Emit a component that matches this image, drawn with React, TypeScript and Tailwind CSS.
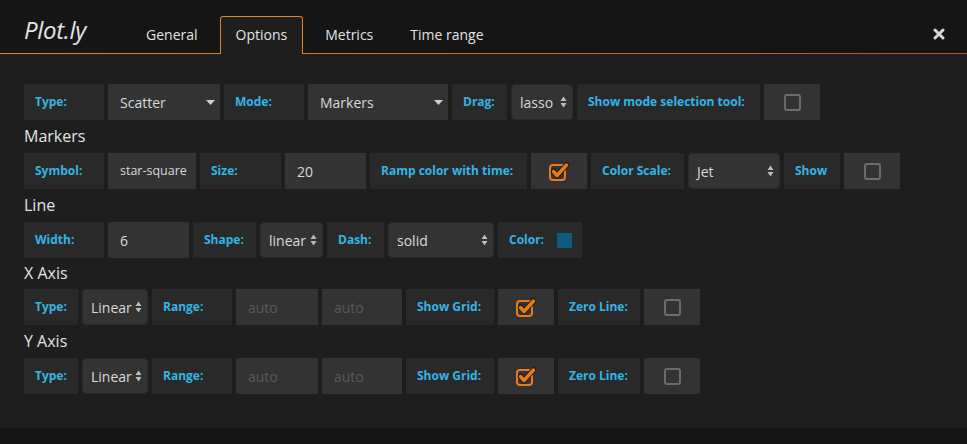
import React from "react";

const font = { fontFamily: '"Open Sans", "Noto Sans", "Liberation Sans", sans-serif' };

function Label({ w, children }: { w: string; children: React.ReactNode }) {
  return (
    <div className={`${w} h-[36px] shrink-0 bg-[#292929] flex items-center pl-[11px] text-[12px] font-bold text-[#33b5e5] whitespace-nowrap`}>
      {children}
    </div>
  );
}

function Value({ w, children, muted = false, size = "text-[14px]" }: { w: string; children: React.ReactNode; muted?: boolean; size?: string }) {
  return (
    <div className={`${w} h-[36px] shrink-0 bg-[#333333] flex items-center pl-[12px] ${size} ${muted ? "text-[#5a5a5a]" : "text-[#d8d9da]"} whitespace-nowrap`}>
      {children}
    </div>
  );
}

function Caret() {
  return (
    <svg width="9" height="5" viewBox="0 0 9 5" className="ml-auto mr-[5px]">
      <path d="M0 0 L9 0 L4.5 5 Z" fill="#cfcfcf" />
    </svg>
  );
}

function UpDown() {
  return (
    <svg width="7" height="12" viewBox="0 0 7 12" className="ml-auto mr-[5px]">
      <path d="M0.5 5 L3.5 0.5 L6.5 5 Z" fill="#bdbdbd" />
      <path d="M0.5 7 L3.5 11.5 L6.5 7 Z" fill="#bdbdbd" />
    </svg>
  );
}

function SelectDown({ w, children }: { w: string; children: React.ReactNode }) {
  return (
    <div className={`${w} h-[36px] shrink-0 bg-[#333333] flex items-center pl-[12px] text-[14px] text-[#d8d9da]`}>
      <span>{children}</span>
      <Caret />
    </div>
  );
}

function SelectNative({ w, children }: { w: string; children: React.ReactNode }) {
  return (
    <div className={`${w} h-[36px] shrink-0 bg-[#333333] rounded-[4px] border border-[#2a2a2a] flex items-center pl-[8px] text-[14px] text-[#d8d9da]`}>
      <span>{children}</span>
      <UpDown />
    </div>
  );
}

function Check({ checked, w = "w-[56px]" }: { checked: boolean; w?: string }) {
  return (
    <div className={`${w} h-[36px] shrink-0 bg-[#333333] flex items-center justify-center`}>
      {checked ? (
        <svg width="22" height="22" viewBox="0 0 22 22">
          <rect x="2" y="5" width="15" height="15" rx="3" fill="none" stroke="#eb7b18" strokeWidth="2" />
          <path d="M5.5 11.5 L9 15.5 L18.5 5" fill="none" stroke="#1a1a1a" strokeWidth="5.5" strokeLinecap="round" strokeLinejoin="round" />
          <path d="M5.5 11.5 L9 15.5 L18.5 5" fill="none" stroke="#eb7b18" strokeWidth="3.5" strokeLinecap="round" strokeLinejoin="round" />
        </svg>
      ) : (
        <div className="w-[17px] h-[17px] rounded-[3px] border-2 border-[#6b6b6b]" />
      )}
    </div>
  );
}

function Heading({ children, h = "h-[33px]" }: { children: React.ReactNode; h?: string }) {
  return <div className={`${h} flex items-center text-[16px] text-[#e3e3e3] pb-[1px]`}>{children}</div>;
}

function Row({ children }: { children: React.ReactNode }) {
  return <div className="flex items-center gap-[4px] h-[36px]">{children}</div>;
}

export default function App() {
  return (
    <div style={font} className="w-[967px] h-[444px] bg-[#151515] overflow-hidden">
      <div className="h-[54px] flex items-end relative">
        <div className="absolute left-0 right-0 bottom-0 h-[1px] bg-gradient-to-r from-[#dc8a28] to-[#c24a2a]" />
        <div className="h-[54px] pl-[24px] w-[131px] flex items-start pt-[12px] text-[24px] italic text-[#e3e3e3] tracking-[-0.3px]">
          Plot.ly
        </div>
        <div className="flex gap-[7px] items-end relative">
          <div className="h-[37px] px-[15px] flex items-center text-[14px] text-[#e3e3e3] pb-[2px]">General</div>
          <div className="h-[38px] px-[15px] flex items-center text-[14px] text-[#e3e3e3] bg-[#1f1e1f] border border-b-0 border-[#d8862a] rounded-t-[3px] pb-[2px]">Options</div>
          <div className="h-[37px] px-[15px] flex items-center text-[14px] text-[#e3e3e3] pb-[2px]">Metrics</div>
          <div className="h-[37px] px-[15px] flex items-center text-[14px] text-[#e3e3e3] pb-[2px]">Time range</div>
        </div>
        <div className="ml-auto mr-[22px] mb-[14px]">
          <svg width="12" height="12" viewBox="0 0 12 12">
            <path d="M2 2 L10 10 M10 2 L2 10" stroke="#d8d8d8" strokeWidth="3" strokeLinecap="round" />
          </svg>
        </div>
      </div>

      <div className="h-[374px] bg-[#1f1e1f] pl-[24px] pt-[30px]">
        <Row>
          <Label w="w-[80px]">Type:</Label>
          <SelectDown w="w-[112px]">Scatter</SelectDown>
          <Label w="w-[80px]">Mode:</Label>
          <SelectDown w="w-[140px]">Markers</SelectDown>
          <Label w="w-[55px]">Drag:</Label>
          <SelectNative w="w-[62px]">lasso</SelectNative>
          <Label w="w-[183px]">Show mode selection tool:</Label>
          <Check checked={false} />
        </Row>
        <Heading>Markers</Heading>
        <Row>
          <Label w="w-[80px]">Symbol:</Label>
          <Value w="w-[88px]" size="text-[12.5px]">star-square</Value>
          <Label w="w-[81px]">Size:</Label>
          <Value w="w-[81px]">20</Value>
          <Label w="w-[157px]">Ramp color with time:</Label>
          <Check checked={true} />
          <Label w="w-[93px]">Color Scale:</Label>
          <SelectNative w="w-[92px]">Jet</SelectNative>
          <Label w="w-[56px]">Show</Label>
          <Check checked={false} />
        </Row>
        <Heading>Line</Heading>
        <Row>
          <Label w="w-[80px]">Width:</Label>
          <Value w="w-[81px]">6</Value>
          <Label w="w-[63px]">Shape:</Label>
          <SelectNative w="w-[63px]">linear</SelectNative>
          <Label w="w-[57px]">Dash:</Label>
          <SelectNative w="w-[106px]">solid</SelectNative>
          <Label w="w-[84px]">
            <span>Color:</span>
            <span className="ml-[13px] w-[15px] h-[15px] bg-[#0f5a80] inline-block" />
          </Label>
        </Row>
        <Heading h="h-[31px]">X Axis</Heading>
        <Row>
          <Label w="w-[54px]">Type:</Label>
          <SelectNative w="w-[66px]">Linear</SelectNative>
          <Label w="w-[80px]">Range:</Label>
          <Value w="w-[82px]" muted>auto</Value>
          <Value w="w-[80px]" muted>auto</Value>
          <Label w="w-[88px]">Show Grid:</Label>
          <Check checked={true} />
          <Label w="w-[82px]">Zero Line:</Label>
          <Check checked={false} />
        </Row>
        <Heading>Y Axis</Heading>
        <Row>
          <Label w="w-[54px]">Type:</Label>
          <SelectNative w="w-[66px]">Linear</SelectNative>
          <Label w="w-[80px]">Range:</Label>
          <Value w="w-[82px]" muted>auto</Value>
          <Value w="w-[80px]" muted>auto</Value>
          <Label w="w-[88px]">Show Grid:</Label>
          <Check checked={true} />
          <Label w="w-[82px]">Zero Line:</Label>
          <Check checked={false} />
        </Row>
      </div>
    </div>
  );
}
